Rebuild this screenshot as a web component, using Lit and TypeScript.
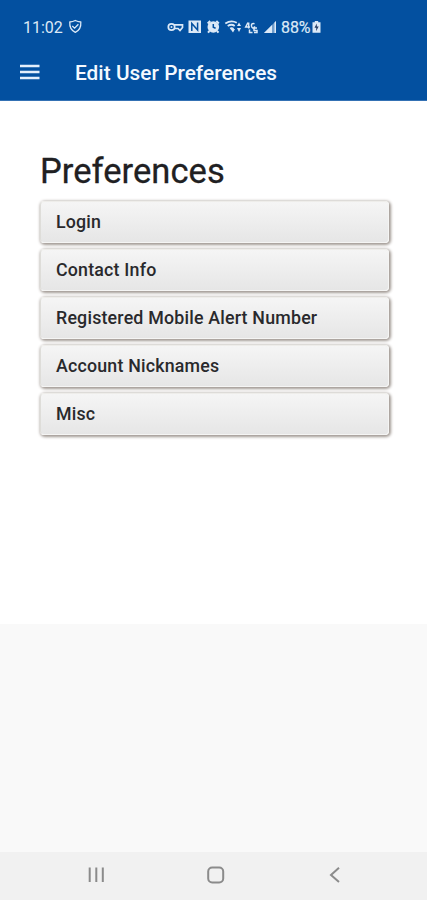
import { LitElement, html, css } from "lit";
import { customElement } from "lit/decorators.js";

@customElement("status-bar")
class StatusBar extends LitElement {
  static styles = css`
    :host { display: flex; height: 44px; padding: 10px 0 0 23px; box-sizing: border-box; color: #dce9f7; font-size: 16px; line-height: 35px; }
    .time { width: 45px; }
    svg { display: block; fill: none; stroke: currentColor; stroke-width: 1.5; }
    .shield { width: 15px; height: 15px; margin-top: 9px; stroke-width: 1.3; }
    .icons { width: 112px; height: 16px; margin: 8px 0 0 84px; }
    .icons .solid { fill: currentColor; stroke: none; }
    .icons .cut { stroke: #0350a0; }
    .pct { margin-left: 2px; letter-spacing: -0.1px; width: 30.500px; -webkit-text-stroke: .2px currentColor; }
    .battery { width: 9px; height: 12px; margin-top: 11px; }
  `;
  render() {
    return html`
      <span class="time">11:02</span>
      <svg class="shield" viewBox="0 0 15 15"><path d="M7.3 1.500Q4.800 2.800 1.800 3Q1.200 10.500 7.300 13.300Q13.400 10.500 12.800 3Q9.800 2.800 7.300 1.500ZM4.300 7l2.300 2.200 3.800-4"/></svg>
      <svg class="icons" viewBox="167 18 112 16">
        <circle cx="171.500" cy="27" r="3.200" stroke-width="1.700"/><circle class="solid" cx="171.500" cy="27" r="1"/>
        <path d="M174 24.800h8.500v2.700l-2.500 3-2-2h-3.500" stroke-width="1.700"/>
        <path class="solid" d="M188.500 20.500H201V33h-12.500z"/>
        <path class="cut" d="M191.800 31v-7.500l5.800 6.500v-7.500"/>
        <circle class="solid" cx="213.300" cy="27" r="5.800"/>
        <path stroke-width="2" d="M207.700 23.500l2.500-2.500M218.800 23.500l-2.500-2.500M209.500 31l-1.500 1.700M217 31l1.500 1.700"/>
        <path class="cut" d="M213.300 24v3.300l2.300 1"/>
        <path d="M225.300 23.500q6-4 11.500-.7M227.700 26q4-2.500 7 0M230 28.500q2-1 3.500.5" stroke-width="1.800"/>
        <path class="solid" d="M230.500 29h4.500l-2 3.500zM237 26l2-3.500 2 3.500zM237 28h4l-2 4z"/>
        <path d="M248 22.500l-2.300 4.500h4.300M248.700 22.500v6M254.500 23.700q-3.500-1-3 2.500.5 2.500 3 1.500v-1.500" stroke-width="1.500"/>
        <path d="M249.500 29.500v3h3M257 28h-3v2.500h3v2h-3" stroke-width="1.500"/>
        <path class="solid" opacity=".5" d="M264 33l12-12v12z"/>
        <path class="solid" d="M264 33l8-8v8zM274.500 22.500l1.500-1.500v12h-1.500z"/>
      </svg>
      <span class="pct">88%</span>
      <svg class="battery" viewBox="0 0 9 12"><path fill="currentColor" stroke="none" d="M2.800 0h3.400v1.300H8.500v10.500H.500v-10.500h2.300z"/><path fill="#243c64" stroke="none" d="M4.800 2.500L2.500 6.700h1.800L4 10.300l2.700-4.700H4.800z"/></svg>
    `;
  }
}

@customElement("preference-row")
class PreferenceRow extends LitElement {
  static styles = css`
    :host { display: block; height: 42px; box-sizing: border-box; padding-left: 15px; border-radius: 4px; border: 1px solid #f5f5f4; border-left-color: #deddd9; border-top-color: #eeedea; background: linear-gradient(#f5f5f5, #e6e6e6); box-shadow: 1px 1px 3px 1px #a09892; color: #29292c; font-size: 17.800px; font-weight: 500; line-height: 40px; letter-spacing: .2px; }
  `;
  render() { return html`<slot></slot>`; }
}

@customElement("app-root")
class AppRoot extends LitElement {
  static styles = css`
    :host { display: flex; flex-direction: column; height: 900px; overflow: hidden; background: #f9f9f9; font-family: Roboto, sans-serif; }
    header { height: 101px; background: #0350a0; flex: none; box-sizing: border-box; border-bottom: 1px solid #3471b4; }
    .title { display: flex; align-items: center; height: 58px; padding-left: 20px; color: #f4f9ff; font-size: 20.800px; font-weight: 500; letter-spacing: .05px; }
    .menu { width: 20px; height: 16px; margin: -2px 35px 0 0; stroke: #e3eefb; stroke-width: 2.300; }
    main { height: 523px; flex: none; box-sizing: border-box; padding: 47px 38px 0 40px; background: #fff; }
    h1 { margin: 0; height: 53px; font-size: 34.500px; line-height: 47px; font-weight: 400; letter-spacing: .05px; color: #202022; white-space: nowrap; -webkit-text-stroke: .3px #202022; }
    .list { display: grid; gap: 6px; }
    nav { margin-top: auto; display: flex; align-items: center; height: 48px; padding-left: 86px; background: #f1f1f1; box-sizing: border-box; }
    nav svg { width: 20px; height: 20px; margin-right: 99.500px; flex: none; margin-top: -3px; fill: none; stroke: #8b8b8b; stroke-width: 2; }
  `;
  render() {
    return html`
      <header>
        <status-bar></status-bar>
        <div class="title">
          <svg class="menu" viewBox="0 0 20 16"><path d="M0 2h19.500M0 8h19.500M0 14h19.500"/></svg>
          <span>Edit User Preferences</span>
        </div>
      </header>
      <main>
        <h1>Preferences</h1>
        <div class="list">
          ${["Login", "Contact Info", "Registered Mobile Alert Number", "Account Nicknames", "Misc"].map(
            (label) => html`<preference-row>${label}</preference-row>`
          )}
        </div>
      </main>
      <nav>
        <svg viewBox="0 0 20 20"><path d="M3.700 2.500v14.500M10.300 2.500v14.500M16.800 2.500v14.500"/></svg>
        <svg viewBox="0 0 20 20"><rect x="2.200" y="2.500" width="15" height="15" rx="4"/></svg>
        <svg viewBox="0 0 20 20"><path d="M14 2.800L6 10l8 7"/></svg>
      </nav>
    `;
  }
}
